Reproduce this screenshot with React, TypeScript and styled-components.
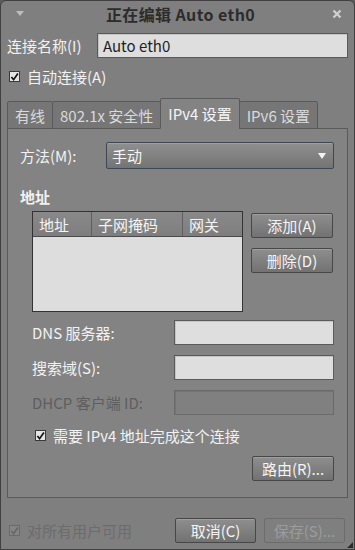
import React from "react";
import styled, { createGlobalStyle } from "styled-components";

const Global = createGlobalStyle`
  html, body { margin: 0; padding: 0; background: #5c5c5c; }
  body { font-family: "Noto Sans CJK SC", "Noto Sans", "Liberation Sans", sans-serif; }
`;

const Window = styled.div`
  width: 355px;
  height: 550px;
  box-sizing: border-box;
  background: #7f7f7f;
  border: 1px solid #404040;
  border-radius: 6px 6px 0 0;
  display: flex;
  flex-direction: column;
  position: relative;
  color: #f2f2f2;
  font-size: 15px;
  overflow: hidden;
`;

const TitleBar = styled.div`
  height: 25px;
  display: flex;
  align-items: center;
  padding: 0 12px 0 14px;
  font-weight: bold;
  font-size: 16px;
  color: #2c2c2c;
`;

const Title = styled.div`
  flex: 1;
  text-align: center;
  padding-left: 4px;
  letter-spacing: 0.4px;
`;

const Body = styled.div`
  flex: 1;
  display: flex;
  flex-direction: column;
  padding: 7px 6px 0 6px;
`;

const Row = styled.div<{ $mt?: number }>`
  display: flex;
  align-items: center;
  margin-top: ${(p) => p.$mt ?? 0}px;
`;

const Label = styled.div<{ $w: number; $disabled?: boolean }>`
  width: ${(p) => p.$w}px;
  flex: none;
  white-space: nowrap;
  color: ${(p) => (p.$disabled ? "#5e5e5e" : "#f2f2f2")};
`;

const TextInput = styled.div<{ $disabled?: boolean }>`
  height: 25px;
  box-sizing: border-box;
  flex: 1;
  border: 1px solid ${(p) => (p.$disabled ? "#6a6a6a" : "#5a5a5a")};
  background: ${(p) => (p.$disabled ? "#808080" : "#dedede")};
  color: #1e1e1e;
  padding: 0 5px;
  display: flex;
  align-items: center;
  font-size: 15px;
  box-shadow: inset 1px 1px 0 ${(p) => (p.$disabled ? "#747474" : "#c4c4c4")};
`;

const CheckRow = styled.label<{ $disabled?: boolean; $mt?: number; $ml?: number }>`
  display: flex;
  align-items: center;
  gap: 7px;
  margin-top: ${(p) => p.$mt ?? 0}px;
  margin-left: ${(p) => p.$ml ?? 0}px;
  color: ${(p) => (p.$disabled ? "#6c6c6c" : "#f2f2f2")};
`;

const Box = styled.span<{ $disabled?: boolean }>`
  width: 11px;
  height: 11px;
  box-sizing: border-box;
  border: 1px solid ${(p) => (p.$disabled ? "#6a6a6a" : "#3a3a3a")};
  background: ${(p) => (p.$disabled ? "#858585" : "#e4e4e4")};
  display: flex;
  align-items: center;
  justify-content: center;
  flex: none;
`;

const Check = ({ disabled }: { disabled?: boolean }) => (
  <Box $disabled={disabled}>
    <svg width="10" height="10" viewBox="0 0 10 10">
      <path
        d="M1.6 5 L4 8 L8.8 1.2"
        fill="none"
        stroke={disabled ? "#666" : "#111"}
        strokeWidth="1.9"
      />
    </svg>
  </Box>
);

const TabStrip = styled.div`
  display: flex;
  align-items: flex-end;
  margin-top: 11px;
  height: 31px;
  position: relative;
  z-index: 1;
  margin-bottom: -1px;
`;

const Tab = styled.div<{ $active?: boolean }>`
  box-sizing: border-box;
  height: ${(p) => (p.$active ? 31 : 28)}px;
  padding: 0 7px;
  display: flex;
  align-items: center;
  border: 1px solid #5a5a5a;
  border-bottom: ${(p) => (p.$active ? "1px solid #838383" : "1px solid #5a5a5a")};
  border-radius: 2px 2px 0 0;
  background: ${(p) => (p.$active ? "#838383" : "#767676")};
  color: ${(p) => (p.$active ? "#f6f6f6" : "#dadada")};
  margin-right: -1px;
  white-space: nowrap;
`;

const Panel = styled.div`
  box-sizing: border-box;
  height: 370px;
  border: 1px solid #5a5a5a;
  background: #838383;
  padding: 13px 13px 0 12px;
  display: flex;
  flex-direction: column;
`;

const Combo = styled.div`
  flex: 1;
  height: 27px;
  box-sizing: border-box;
  border: 1px solid #3e4854;
  border-radius: 2px;
  background: linear-gradient(#8f8f8f, #747474);
  box-shadow: inset 0 1px 0 #a0a0a0;
  display: flex;
  align-items: center;
  justify-content: space-between;
  padding: 0 7px 0 5px;
  color: #f6f6f6;
`;

const Arrow = styled.span`
  width: 0;
  height: 0;
  border-left: 4px solid transparent;
  border-right: 4px solid transparent;
  border-top: 6px solid #f4f4f4;
`;

const Section = styled.div`
  font-weight: bold;
  margin-top: 18px;
  height: 20px;
  line-height: 20px;
`;

const AddrArea = styled.div`
  display: flex;
  gap: 8px;
  margin-top: 4px;
  padding-left: 12px;
`;

const Table = styled.div`
  width: 211px;
  height: 101px;
  box-sizing: border-box;
  border: 1px solid #333;
  background: #dddddd;
  display: flex;
  flex-direction: column;
`;

const THead = styled.div`
  height: 24px;
  display: grid;
  grid-template-columns: 59px 91px 1fr;
  background: linear-gradient(#898989, #7e7e7e);
  border-bottom: 1px solid #4a4a4a;
`;

const Th = styled.div<{ $last?: boolean }>`
  display: flex;
  align-items: center;
  padding-left: 6px;
  border-right: ${(p) => (p.$last ? "none" : "1px solid #5e5e5e")};
  color: #f4f4f4;
`;

const Buttons = styled.div`
  display: flex;
  flex-direction: column;
  gap: 10px;
  padding-top: 2px;
`;

const Button = styled.div<{ $disabled?: boolean; $w?: number }>`
  width: ${(p) => p.$w ?? 82}px;
  height: 25px;
  box-sizing: border-box;
  border: 1px solid ${(p) => (p.$disabled ? "#6c6c6c" : "#474747")};
  border-radius: 2px;
  background: ${(p) =>
    p.$disabled ? "#7f7f7f" : "linear-gradient(#8e8e8e, #727272)"};
  box-shadow: ${(p) => (p.$disabled ? "none" : "inset 0 1px 0 #9e9e9e")};
  color: ${(p) => (p.$disabled ? "#9c9c9c" : "#f4f4f4")};
  display: flex;
  align-items: center;
  justify-content: center;
  white-space: nowrap;
`;

const FieldRow = styled.div<{ $mt: number }>`
  display: flex;
  align-items: center;
  padding-left: 12px;
  margin-top: ${(p) => p.$mt}px;
`;

const RouteRow = styled.div`
  display: flex;
  justify-content: flex-end;
  margin-top: 10px;
`;

const Footer = styled.div`
  display: flex;
  align-items: center;
  margin-top: 20px;
  padding-left: 2px;
`;

const FooterButtons = styled.div`
  margin-left: auto;
  display: flex;
  gap: 8px;
  padding-right: 3px;
`;

const Grip = styled.span`
  position: absolute;
  right: 1px;
  bottom: 1px;
  width: 0;
  height: 0;
  border-left: 6px solid transparent;
  border-bottom: 6px solid #2a2a2a;
`;

const Tri = () => (
  <svg width="10" height="8" viewBox="0 0 10 8">
    <path d="M1 1 L9 1 L5 6 Z" fill="#bdbdbd" />
  </svg>
);

const Close = () => (
  <svg width="10" height="10" viewBox="0 0 10 10">
    <path d="M1.5 1.5 L8.5 8.5 M8.5 1.5 L1.5 8.5" stroke="#d0d0d0" strokeWidth="2.2" />
  </svg>
);

export default function App() {
  return (
    <>
      <Global />
      <Window>
        <TitleBar>
          <Tri />
          <Title>正在编辑 Auto eth0</Title>
          <Close />
        </TitleBar>
        <Body>
          <Row>
            <Label $w={90}>连接名称(I)</Label>
            <TextInput>Auto eth0</TextInput>
          </Row>
          <CheckRow $mt={8} $ml={2}>
            <Check />
            自动连接(A)
          </CheckRow>
          <TabStrip>
            <Tab>有线</Tab>
            <Tab>802.1x 安全性</Tab>
            <Tab $active>IPv4 设置</Tab>
            <Tab>IPv6 设置</Tab>
          </TabStrip>
          <Panel>
            <Row>
              <Label $w={86}>方法(M):</Label>
              <Combo>
                手动
                <Arrow />
              </Combo>
            </Row>
            <Section>地址</Section>
            <AddrArea>
              <Table>
                <THead>
                  <Th>地址</Th>
                  <Th>子网掩码</Th>
                  <Th $last>网关</Th>
                </THead>
              </Table>
              <Buttons>
                <Button>添加(A)</Button>
                <Button>删除(D)</Button>
              </Buttons>
            </AddrArea>
            <FieldRow $mt={8}>
              <Label $w={142}>DNS 服务器:</Label>
              <TextInput />
            </FieldRow>
            <FieldRow $mt={10}>
              <Label $w={142}>搜索域(S):</Label>
              <TextInput />
            </FieldRow>
            <FieldRow $mt={10}>
              <Label $w={142} $disabled>
                DHCP 客户端 ID:
              </Label>
              <TextInput $disabled />
            </FieldRow>
            <CheckRow $mt={10} $ml={15}>
              <Check />
              需要 IPv4 地址完成这个连接
            </CheckRow>
            <RouteRow>
              <Button>路由(R)...</Button>
            </RouteRow>
          </Panel>
          <Footer>
            <CheckRow $disabled>
              <Check disabled />
              对所有用户可用
            </CheckRow>
            <FooterButtons>
              <Button $w={81}>取消(C)</Button>
              <Button $w={81} $disabled>
                保存(S)...
              </Button>
            </FooterButtons>
          </Footer>
        </Body>
        <Grip />
      </Window>
    </>
  );
}
